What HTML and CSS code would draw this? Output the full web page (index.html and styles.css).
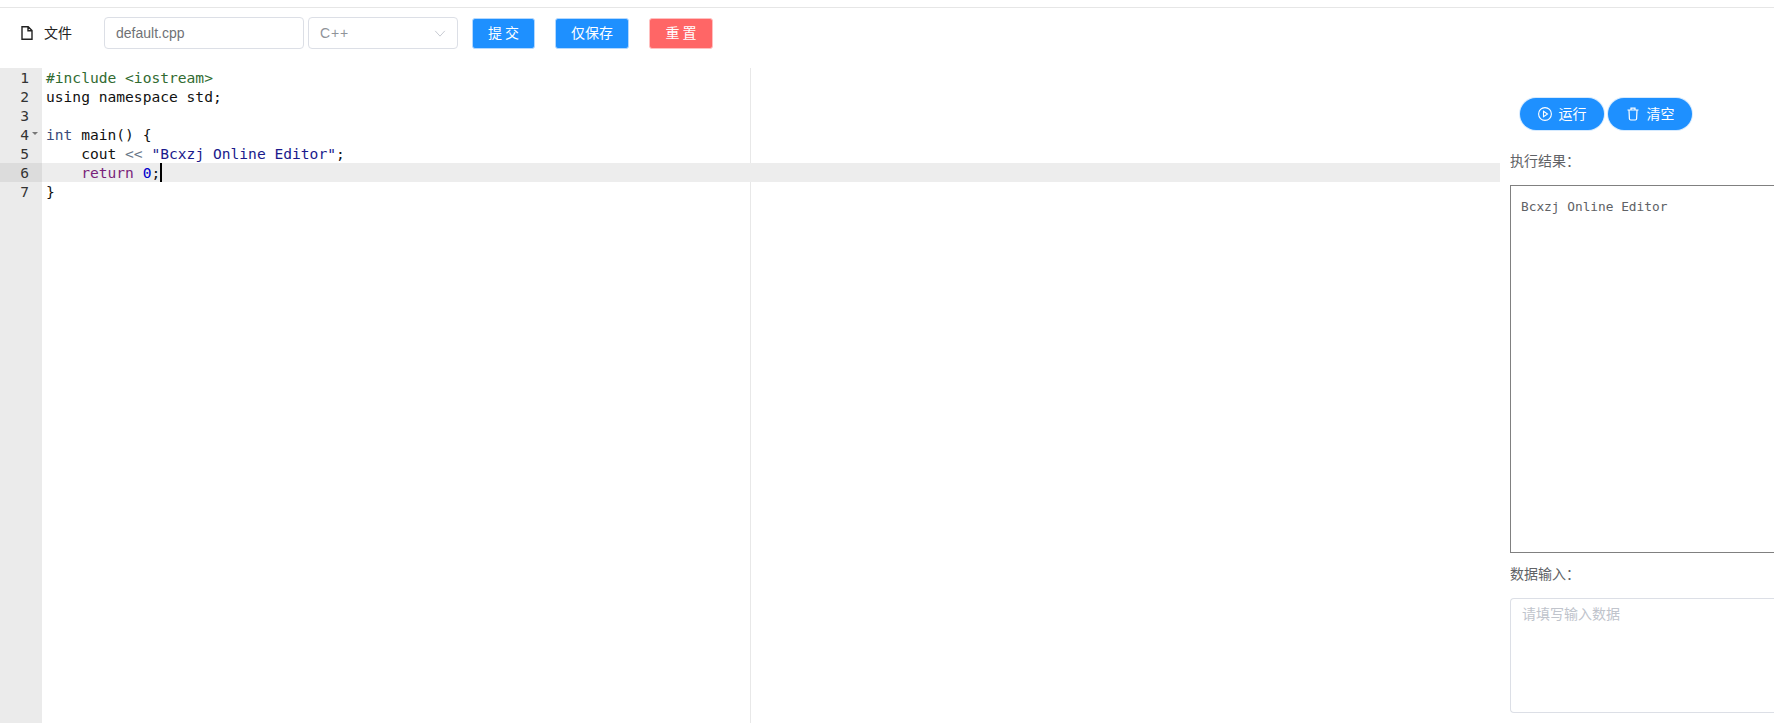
FILE: index.html
```html
<!DOCTYPE html>
<html lang="zh">
<head>
<meta charset="utf-8">
<title>Bcxzj Online Editor</title>
<link rel="stylesheet" href="styles.css">
</head>
<body>
<div class="page">
  <header class="toolbar">
    <div class="file-menu">
      <svg class="file-icon" viewBox="0 0 12 14" width="12" height="14"><path d="M1 .8h6.200L11 4.600v8.600H1zM7 .8v4h4" fill="none" stroke="#222" stroke-width="1.400"/></svg>
      <span>文件</span>
    </div>
    <div class="field name-field">default.cpp</div>
    <div class="field lang-field">
      <span>C++</span>
      <svg viewBox="0 0 13 8" width="12" height="7"><path d="M1 1l5.500 6L12 1" fill="none" stroke="#c0c4cc" stroke-width="1"/></svg>
    </div>
    <button class="btn btn-submit">提 交</button>
    <button class="btn btn-save">仅保存</button>
    <button class="btn btn-reset">重 置</button>
  </header>
  <main class="workspace">
    <section class="editor">
      <div class="gutter">
        <div class="num">1</div>
        <div class="num">2</div>
        <div class="num">3</div>
        <div class="num fold">4</div>
        <div class="num">5</div>
        <div class="num active-num">6</div>
        <div class="num">7</div>
      </div>
      <div class="code">
        <div class="print-margin"></div>
        <div class="line"><span class="c-pre">#include &lt;iostream&gt;</span></div>
        <div class="line">using namespace std;</div>
        <div class="line">&nbsp;</div>
        <div class="line"><span class="c-type">int</span> main() {</div>
        <div class="line">    cout <span class="c-op">&lt;&lt;</span> <span class="c-str">"Bcxzj Online Editor"</span>;</div>
        <div class="line active-line">    <span class="c-kw">return</span> <span class="c-num">0</span>;<span class="cursor"></span></div>
        <div class="line">}</div>
      </div>
    </section>
    <aside class="side">
      <div class="actions">
        <button class="pill">
          <svg viewBox="0 0 14 14" width="14" height="14"><circle cx="7" cy="7" r="6.400" fill="none" stroke="#fff" stroke-width="1.100"/><path d="M5.500 4.200L9.500 7l-4 2.800z" fill="none" stroke="#fff" stroke-width="1.100"/></svg>
          <span>运行</span>
        </button>
        <button class="pill">
          <svg viewBox="0 0 14 14" width="14" height="14"><path d="M1.500 3h11M5 3V1.200h4V3M3 3l.4 8.800q.1 1.200 1.300 1.200h4.600q1.200 0 1.300-1.200L11 3" fill="none" stroke="#fff" stroke-width="1.200"/></svg>
          <span>清空</span>
        </button>
      </div>
      <div class="label result-label">执行结果：</div>
      <pre class="output">Bcxzj Online Editor</pre>
      <div class="label input-label">数据输入：</div>
      <div class="stdin">请填写输入数据</div>
    </aside>
  </main>
</div>
</body>
</html>
```
FILE: styles.css
```css
* { box-sizing: border-box; }
html, body { margin: 0; height: 100%; overflow: hidden; background: #fff; }
body { font-family: "Noto Sans CJK SC", "Liberation Sans", sans-serif; font-size: 14px; color: #606266; }
.page { height: 723px; display: flex; flex-direction: column; padding-top: 7px; }
.toolbar {
  height: 61px; flex: none; border-top: 1px solid #e6e6e6;
  display: flex; align-items: flex-start; padding: 9px 0 0 21px;
}
.file-menu { display: flex; align-items: center; gap: 11px; height: 32px; width: 83px; color: #222; font-size: 14px; }
.file-menu span { line-height: 20px; padding-bottom: 3px; }
.file-icon { flex: none; margin-bottom: 1px; }
.field {
  height: 32px; border: 1px solid #dcdfe6; border-radius: 4px; background: #fff;
  display: flex; align-items: center; padding: 0 11px;
  font-family: "Liberation Sans", sans-serif; font-size: 14px; color: #707276;
}
.name-field { width: 200px; margin-right: 4px; }
.lang-field { width: 150px; justify-content: space-between; color: #909399; letter-spacing: .8px; padding-right: 11px; margin-right: 14px; }
.btn {
  height: 31px; margin-top: 1px; border: 1px solid #b3d8ff; border-radius: 3px; padding: 0 0 3px;
  color: #fff; font-family: "Noto Sans CJK SC", sans-serif; font-size: 14px; line-height: 1; cursor: pointer;
}
.btn-submit { width: 63px; background: #1e90ff; margin-right: 20px; }
.btn-save { width: 74px; background: #1e90ff; margin-right: 20px; }
.btn-reset { width: 64px; background: #ff6666; border-color: #ffc0c0; }
.workspace { flex: 1; min-height: 0; display: flex; }
.editor { width: 1500px; flex: none; display: flex; font-family: "DejaVu Sans Mono", monospace; font-size: 14.6px; line-height: 19px; color: #111; }
.gutter { width: 42px; flex: none; background: #ebebeb; color: #333; }
.num { height: 19px; padding-right: 13px; text-align: right; position: relative; }
.fold::after {
  content: ""; position: absolute; right: 4px; top: 7px;
  border: 3px solid transparent; border-top: 3px solid #777; border-bottom: 0;
}
.active-num { background: #dcdcdc; }
.code { flex: 1; position: relative; padding: 0; }
.print-margin { position: absolute; left: 708px; top: 0; bottom: 0; width: 1px; background: #e8e8e8; }
.line { height: 19px; padding-left: 4px; white-space: pre; position: relative; }
.active-line { background: #ededed; }
.c-pre { color: #316b31; }
.c-type { color: #3a4a7a; }
.c-op { color: #687687; }
.c-str { color: #1a1a8c; }
.c-kw { color: #7a1f7a; }
.c-num { color: #0000cd; }
.cursor { display: inline-block; width: 2px; height: 19px; background: #000; vertical-align: top; }
.side { flex: 1; min-width: 0; padding: 30px 0 0 10px; }
.actions { display: flex; gap: 4px; padding-left: 10px; height: 32px; }
.pill {
  width: 84px; height: 32px; border: 0; border-radius: 16px; background: #1e90ff; color: #fff; padding: 0;
  display: flex; align-items: center; justify-content: center; gap: 7px;
  font-family: "Noto Sans CJK SC", sans-serif; font-size: 14px; box-shadow: 0 0 0 1px #d5eaff;
}
.pill span { line-height: 20px; padding-bottom: 2px; }
.label { font-size: 14px; line-height: 20px; color: #606266; }
.result-label { margin-top: 20px; }
.output {
  margin: 15px 0 0; height: 368px; width: 300px; border: 1px solid #808080; border-right: 0;
  padding: 12px 10px; font-family: "DejaVu Sans Mono", monospace; font-size: 12.8px; line-height: 18px; color: #606266;
}
.input-label { margin-top: 10px; }
.stdin {
  margin-top: 15px; height: 115px; width: 300px; border: 1px solid #dcdfe6; border-right: 0; border-radius: 4px 0 0 4px;
  padding: 4px 11px; font-size: 14px; line-height: 21px; color: #c0c4cc;
}
```
